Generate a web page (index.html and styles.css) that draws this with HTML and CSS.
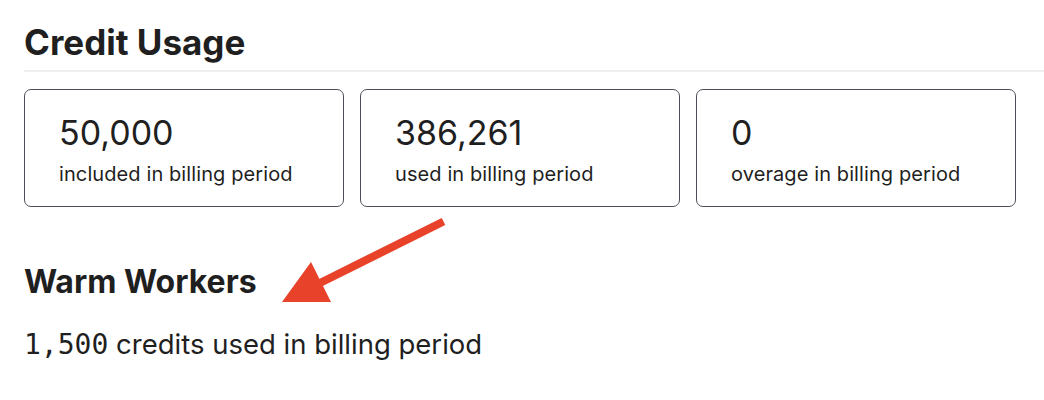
FILE: index.html
```html
<!DOCTYPE html>
<html lang="en">
<head>
    <meta charset="UTF-8" />
    <meta name="viewport" content="width=device-width, initial-scale=1.0"/>
    <title>Credit Usage</title>
    <link rel="stylesheet" href="styles.css">
</head>
<body>
    <main class="page">
        <section class="usage">
            <h2 class="section-title">Credit Usage</h2>
            <div class="stats">
                <div class="stat-card">
                    <div class="stat-value">50,000</div>
                    <div class="stat-label">included in billing period</div>
                </div>
                <div class="stat-card">
                    <div class="stat-value">386,261</div>
                    <div class="stat-label">used in billing period</div>
                </div>
                <div class="stat-card">
                    <div class="stat-value">0</div>
                    <div class="stat-label">overage in billing period</div>
                </div>
            </div>
        </section>

        <section class="workers">
            <h3>Warm Workers</h3>
            <p><code>1,500</code> credits used in billing period</p>
        </section>

        <svg class="callout-arrow" width="1044" height="400" viewBox="0 0 1044 400">
            <line x1="443.5" y1="221.5" x2="316" y2="285" stroke="#e8432a" stroke-width="8"/>
            <polygon points="282,302 311,262 331,302" fill="#e8432a"/>
        </svg>
    </main>
</body>
</html>
```

FILE: styles.css
```css
* {
    margin: 0;
    padding: 0;
    box-sizing: border-box;
}

body {
    font-family: 'Inter', 'Noto Sans', sans-serif;
    background: #ffffff;
    color: #1f1f1f;
}

.page {
    position: relative;
    height: 400px;
    padding: 22px 0 0 24px;
}

.section-title {
    font-size: 35px;
    font-weight: 700;
    line-height: 40px;
    padding-bottom: 8px;
    border-bottom: 2px solid #efefef;
}

.stats {
    display: grid;
    grid-template-columns: repeat(3, 320px);
    gap: 16px;
    margin-top: 17px;
}

.stat-card {
    height: 118px;
    border: 1.5px solid #4b5058;
    border-radius: 7px;
    padding: 21px 34px;
}

.stat-value {
    font-size: 34px;
    line-height: 44px;
}

.stat-label {
    font-size: 20px;
    line-height: 26px;
    margin-top: 6px;
    letter-spacing: 0.1px;
}

.workers {
    margin-top: 55px;
}

.workers h3 {
    font-size: 32px;
    font-weight: 700;
    line-height: 40px;
}

.workers p {
    font-size: 27.5px;
    line-height: 34px;
    margin-top: 25px;
}

.workers code {
    font-family: 'DejaVu Sans Mono', monospace;
    font-size: 28px;
}

.callout-arrow {
    position: absolute;
    left: 0;
    top: 0;
    pointer-events: none;
}
```
